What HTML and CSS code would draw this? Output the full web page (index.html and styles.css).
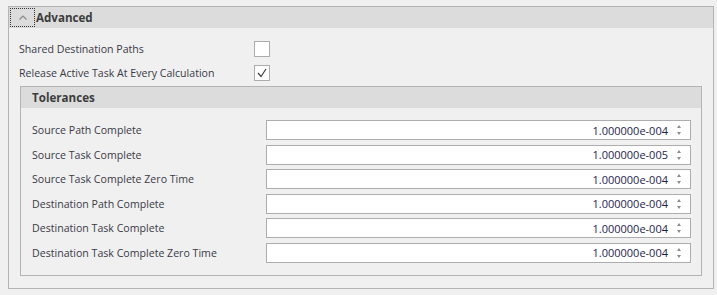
FILE: index.html
```html
<!DOCTYPE html>
<html lang="en">
<head>
  <meta charset="UTF-8">
  <title>Advanced</title>
  <link rel="stylesheet" href="styles.css">
</head>
<body>
  <div class="group outer">
    <div class="group-head">
      <span class="toggle">
        <svg width="8" height="5" viewBox="0 0 8 5"><polyline points="0.5,4.5 4,1 7.5,4.5" /></svg>
      </span>
      <span class="group-title">Advanced</span>
    </div>
    <div class="group-body">
      <div class="check-row">
        <span class="label">Shared Destination Paths</span>
        <span class="checkbox"></span>
      </div>
      <div class="check-row">
        <span class="label">Release Active Task At Every Calculation</span>
        <span class="checkbox checked">
          <svg width="14" height="14" viewBox="0 0 14 14"><polyline points="3,7 6,10.5 11,3" /></svg>
        </span>
      </div>

      <div class="group inner">
        <div class="group-head">
          <span class="group-title">Tolerances</span>
        </div>
        <div class="tol-body">
          <div class="tol-row">
            <span class="label">Source Path Complete</span>
            <div class="spin"><span class="value">1.000000e-004</span><span class="arrows"></span></div>
          </div>
          <div class="tol-row">
            <span class="label">Source Task Complete</span>
            <div class="spin"><span class="value">1.000000e-005</span><span class="arrows"></span></div>
          </div>
          <div class="tol-row">
            <span class="label">Source Task Complete Zero Time</span>
            <div class="spin"><span class="value">1.000000e-004</span><span class="arrows"></span></div>
          </div>
          <div class="tol-row">
            <span class="label">Destination Path Complete</span>
            <div class="spin"><span class="value">1.000000e-004</span><span class="arrows"></span></div>
          </div>
          <div class="tol-row">
            <span class="label">Destination Task Complete</span>
            <div class="spin"><span class="value">1.000000e-004</span><span class="arrows"></span></div>
          </div>
          <div class="tol-row">
            <span class="label">Destination Task Complete Zero Time</span>
            <div class="spin"><span class="value">1.000000e-004</span><span class="arrows"></span></div>
          </div>
        </div>
      </div>
    </div>
  </div>
</body>
</html>
```

FILE: styles.css
```css
* {
  margin: 0;
  padding: 0;
  box-sizing: border-box;
}

body {
  font-family: 'Open Sans', 'Noto Sans', sans-serif;
  font-size: 10.6px;
  color: #3a3a46;
  background-color: #f0f0f0;
  padding: 6px 0 0 8px;
}

.group {
  border: 1px solid #b4b4b4;
  background-color: #f0f0f0;
}

.outer {
  width: 706px;
  height: 283px;
}

.group-head {
  display: flex;
  align-items: center;
  height: 21px;
  background-color: #dcdcdc;
}

.group-title {
  font-weight: 700;
  font-size: 11.6px;
  color: #3c3c3c;
}

.toggle {
  display: flex;
  align-items: center;
  justify-content: center;
  width: 25px;
  height: 19px;
  margin: 0 1px 0 1px;
  border: 1px dotted #333;
}

.toggle svg {
  fill: none;
  stroke: #8a8a8a;
  stroke-width: 1.2;
}

.group-body {
  padding: 13px 11px 0 10px;
}

.check-row {
  display: flex;
  align-items: center;
  height: 16px;
  margin-bottom: 8px;
}

.check-row .label {
  width: 235px;
  margin-top: -1px;
}

.checkbox {
  width: 16px;
  height: 16px;
  border: 1px solid #acacac;
  background-color: #fff;
  display: flex;
  align-items: center;
  justify-content: center;
}

.checkbox svg {
  fill: none;
  stroke: #404040;
  stroke-width: 1.2;
}

.inner {
  margin: -3px 0 0 1px;
  height: 190px;
}

.inner .group-head {
  padding-left: 11px;
}

.tol-body {
  display: flex;
  flex-direction: column;
  gap: 4.6px;
  padding: 12px 10px 0 11px;
}

.tol-row {
  display: flex;
  align-items: center;
  height: 20px;
}

.tol-row .label {
  width: 234px;
}

.spin {
  flex: 1;
  height: 20px;
  display: flex;
  align-items: center;
  justify-content: flex-end;
  border: 1px solid #adadad;
  background-color: #fff;
}

.value {
  color: #1e1e50;
  font-size: 11px;
}

.arrows {
  position: relative;
  width: 22px;
  height: 18px;
}

.arrows::before,
.arrows::after {
  content: "";
  position: absolute;
  left: 9px;
  border-left: 2.5px solid transparent;
  border-right: 2.5px solid transparent;
}

.arrows::before {
  top: 4px;
  border-bottom: 3px solid #8c8c8c;
}

.arrows::after {
  top: 11px;
  border-top: 3px solid #8c8c8c;
}
```
